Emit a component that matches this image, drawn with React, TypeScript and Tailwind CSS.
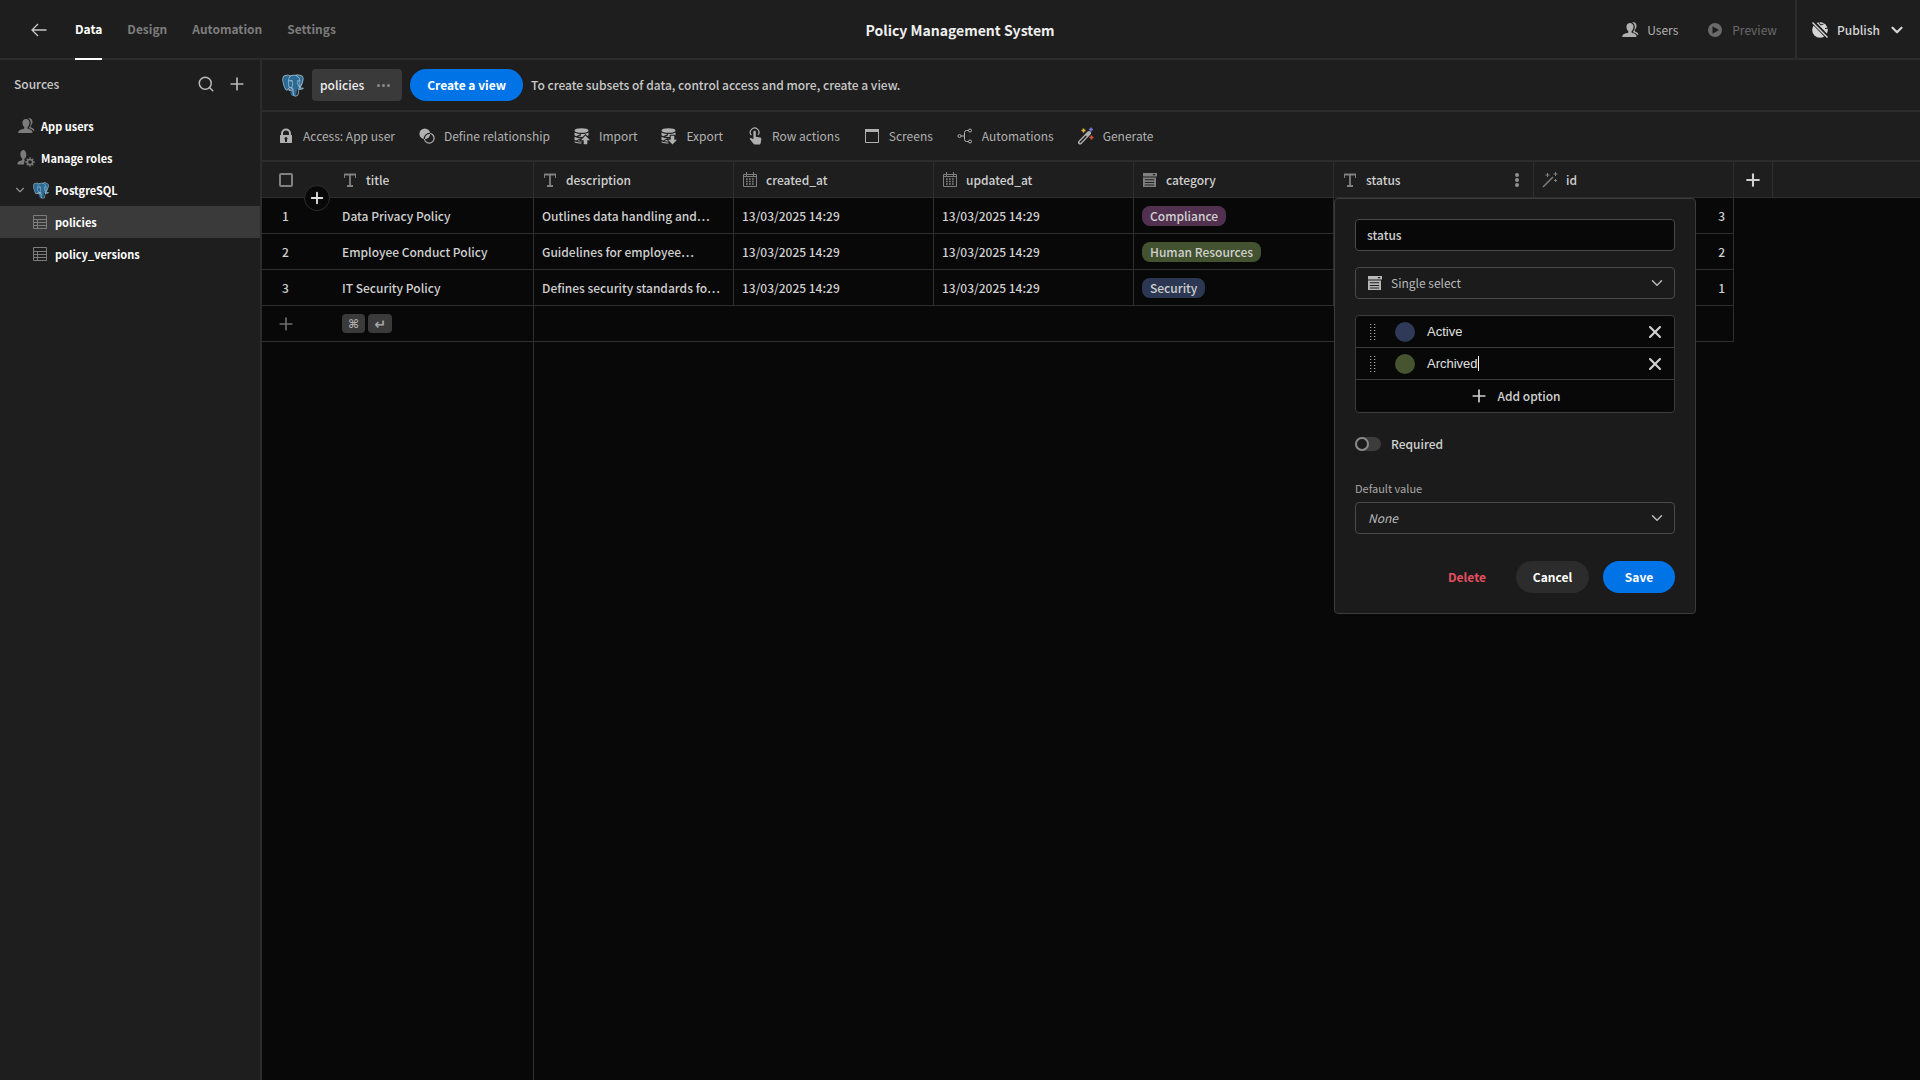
import React from 'react';
import { ChevronDown, Plus, Search, X } from 'lucide-react';
import { SiPostgresql } from 'react-icons/si';

interface IconProps {
  className?: string;
}

const PostgresIcon: React.FC<{ size: 'sm' | 'md' }> = ({ size }) => (
  <span className={`relative block shrink-0 ${size === 'md' ? 'w-[22px] h-[23px]' : 'w-4 h-[17px]'}`}>
    <svg viewBox="0 0 24 24" className="absolute inset-0 w-full h-full">
      <path
        fill="#2c6a94"
        d="M4.5.8C1.6 1.3.5 4 .9 7.500c.5 3.600 2 8.500 4 9.400 1 .3 2-.8 3-1.700l1.300.6c-.2 3 .1 6.500 1.600 7.400 1.700.9 4.400.2 5-2l.7-5c2 .5 5 .2 6.500-1.500-.8-.3-2 0-2.600-.4 2-3 3.500-8 2.800-10.500C21.500.8 18 .2 15.500.9 12.500.2 10.500.8 9.500 1.500 8 .9 6.200.6 4.500.8z"
      />
    </svg>
    <SiPostgresql className="absolute inset-0 w-full h-full text-[#a9c6d8]" />
  </span>
);

const ArrowIcon: React.FC<IconProps> = ({ className }) => (
  <svg viewBox="0 0 18 18" className={`w-[18px] h-[18px] shrink-0 ${className ?? ''}`} fill="none" stroke="currentColor" strokeWidth="1.300">
    <path d="M16.500 9H2M8 3 2 9l6 6" />
  </svg>
);

const UsersIcon: React.FC<IconProps> = ({ className }) => (
  <svg viewBox="0 0 18 18" className={`w-[18px] h-[18px] shrink-0 ${className ?? ''}`} fill="currentColor">
    <path d="M11.500 12.100c-.9-.2-1-.7-1-1.300 0-.5.300-.7.700-1.200.8-1 1.300-2.300 1.300-3.800C12.500 3.300 11 2 9 2S5.400 3.300 5.400 5.800c0 1.500.5 2.800 1.300 3.800.4.500.7.700.7 1.200 0 .6-.1 1.100-1 1.300C3 12.600 1.200 13.700 1.200 15.500c0 .3.200.5.500.5H15c.3 0 .5-.2.500-.5 0-1.800-1.300-2.900-4-3.400z" />
    <path d="M11.200 1.400c2.500-.8 4.300.8 4.300 3.400 0 1.500-.5 2.600-1.200 3.500-.4.500-.6.800-.6 1.300 0 .6.200.9.900 1.100 1.500.5 2.600 1.300 2.900 3h-1.300c-.8-1.200-2-1.900-3.900-2.300-.3-.1-.4-.4-.1-.9.900-1.200 1.600-2.700 1.600-4.700 0-2-.9-3.600-2.600-4.400z" />
  </svg>
);

const UserGearIcon: React.FC<IconProps> = ({ className }) => (
  <svg viewBox="0 0 18 18" className={`w-[18px] h-[18px] shrink-0 ${className ?? ''}`} fill="currentColor">
    <path d="M8 11.500c-.6-.3-.7-.6-.7-1.100 0-.4.300-.6.700-1.100.8-.9 1.300-2 1.300-3.600C9.300 3.200 8 1 6.800 1 4.900 1 3.400 2.500 3.400 5c0 1.600.5 3 1.300 4 .4.500.6.700.6 1.200 0 .6-.2 1-1 1.200-2.500.6-3.900 1.700-3.900 3.600 0 .3.200.5.500.5h6.300c-.2-1.600.1-3 .8-4z" />
    <circle cx="13" cy="13" r="2.600" fill="none" stroke="currentColor" strokeWidth="1.500" />
    <path d="M13 8.300v2M13 15.700v2M8.300 13h2M15.700 13h2M9.700 9.700l1.400 1.400M14.900 14.900l1.400 1.400M16.300 9.700l-1.400 1.400M11.100 14.900l-1.400 1.400" stroke="currentColor" strokeWidth="1.300" />
  </svg>
);

const TableIcon: React.FC<IconProps> = ({ className }) => (
  <svg viewBox="0 0 16 16" className={`w-4 h-4 shrink-0 ${className ?? ''}`} fill="none" stroke="currentColor">
    <path d="M1.500 1.500h13v13h-13zM1.500 5.500h13M1.500 8.500h13M1.500 11.500h13M5.500 5.500v9" />
  </svg>
);

const LockIcon = () => (
  <svg viewBox="0 0 18 18" className="w-[18px] h-[18px] shrink-0" fill="currentColor">
    <path
      fillRule="evenodd"
      d="M14.500 8H14V6.500a5 5 0 0 0-10 0V8h-.5a.5.500 0 0 0-.5.500v7c0 .3.200.5.500.5h11c.3 0 .5-.2.500-.5v-7a.5.500 0 0 0-.5-.5zM6 6.500a3 3 0 0 1 6 0V8H6zm4 6.200v1.800a.5.500 0 0 1-.5.500h-1a.5.500 0 0 1-.5-.5v-1.800a1.500 1.500 0 1 1 2 0z"
    />
  </svg>
);

const RelationshipIcon = () => (
  <svg viewBox="0 0 18 18" className="w-[18px] h-[18px] shrink-0">
    <circle cx="11.200" cy="11.200" r="4.900" fill="#1e1e1e" stroke="currentColor" strokeWidth="1.200" />
    <circle cx="6.800" cy="6.800" r="5.400" fill="currentColor" />
    <path d="M6.300 12a5.400 5.400 0 0 1 5.700-5.700" fill="none" stroke="#1e1e1e" strokeWidth="1.200" />
    <path d="M7.200 12.800a6.200 6.200 0 0 0 5.600-5.600" fill="none" stroke="#1e1e1e" strokeWidth="1" />
  </svg>
);

const DatabaseArrowIcon: React.FC<{ up?: boolean }> = ({ up }) => {
  const arrow = up ? 'M12.500 8.500l4.500 4.800h-2.700v4h-3.600v-4H8z' : 'M12.500 17.500l4.500-4.800h-2.700v-4h-3.600v4H8z';
  return (
    <svg viewBox="0 0 18 18" className="w-[18px] h-[18px] shrink-0" fill="currentColor">
      <ellipse cx="8.500" cy="3.500" rx="7" ry="2.300" />
      <path d="M1.500 5.400c2 1.200 4.500 1.500 7 1.500s5-.3 7-1.500v2.800c-1.500 1.300-4.500 1.700-7 1.700s-5.500-.4-7-1.700z" />
      <path d="M1.500 9.700c2 1.200 4.500 1.500 7 1.500v3.500c-2.500 0-5.500-.7-7-2z" />
      <path d="M1.500 14.200c2 1.200 4.500 1.300 7 1.300v1c-2.500 0-5.500-.3-7-1.300z" />
      <path d="M4 9.600l4-2M3.500 13.800l4.500-2" stroke="#1e1e1e" strokeWidth="1.200" />
      <path d={arrow} stroke="#1e1e1e" strokeWidth="2" />
      <path d={arrow} />
    </svg>
  );
};

const TouchIcon = () => (
  <svg viewBox="0 0 18 18" className="w-[18px] h-[18px] shrink-0" fill="currentColor">
    <path d="M7.400 5c0-.8.500-1.300 1.200-1.300S9.800 4.200 9.800 5v4.700l4.300.8c.9.200 1.300.8 1.200 1.700l-.6 3.800c-.1.900-.6 1.500-1.400 1.500H9c-.6 0-1.100-.3-1.500-.8L3.900 12.300c-.5-.8.3-1.700 1.200-1.300l2.300 1.200z" />
    <path d="M5.400 8.200A4.300 4.300 0 1 1 12 8" fill="none" stroke="currentColor" strokeWidth="1.200" />
  </svg>
);

const ScreenIcon = () => (
  <svg viewBox="0 0 18 18" className="w-[18px] h-[18px] shrink-0">
    <path d="M2.500 2.500h13v13h-13z" fill="none" stroke="currentColor" />
    <path d="M2 2h14v3H2z" fill="currentColor" />
  </svg>
);

const BranchIcon = () => (
  <svg viewBox="0 0 18 18" className="w-[18px] h-[18px] shrink-0" fill="none" stroke="currentColor">
    <circle cx="3.500" cy="9" r="1.500" />
    <circle cx="14" cy="3.500" r="1.500" />
    <circle cx="14" cy="14.500" r="1.500" />
    <path d="M5 9h3.500M12.500 3.500h-2a2 2 0 0 0-2 2v7a2 2 0 0 0 2 2h2" />
  </svg>
);

const GenerateIcon = () => (
  <svg viewBox="0 0 18 18" className="w-[18px] h-[18px] shrink-0" fill="none">
    <path d="M3 15.500 12 6" stroke="#b0b0b0" strokeWidth="4" strokeLinecap="round" />
    <path d="M3.200 15.300 9 9.200" stroke="#1e1e1e" strokeWidth="1.500" strokeLinecap="round" />
    <path d="M6.500 1.500v4M4.500 3.500h4" stroke="#e5b93c" strokeWidth="1.600" />
    <path d="M14 .5v4M12 2.500h4" stroke="#7373e0" strokeWidth="1.600" />
    <path d="M14.500 8.500v4M12.500 10.500h4" stroke="#e0523f" strokeWidth="1.600" />
  </svg>
);

const TextIcon = () => (
  <svg viewBox="0 0 16 16" className="w-4 h-4 shrink-0" fill="none" stroke="currentColor">
    <path d="M2 2.500h12M8 2.500V14M5 14h6" strokeWidth="1.800" />
    <path d="M2.500 2v4M13.500 2v4" />
  </svg>
);

const CalendarIcon = () => (
  <svg viewBox="0 0 16 16" className="w-4 h-4 shrink-0" fill="none" stroke="currentColor">
    <path d="M1.500 2.500h13v12h-13zM4.500 0v4M11.500 0v4M1.500 4.500h13" />
    <path d="M4 7h9M4 9.500h9M4 12h9" strokeWidth="1.500" strokeDasharray="1.700 1.300" />
  </svg>
);

const SelectIcon = () => (
  <svg viewBox="0 0 16 16" className="w-4 h-4 shrink-0" fill="currentColor">
    <path fillRule="evenodd" d="M1 1h14v3.500H1zM10.500 2l1.500 1.700L13.500 2zM1 5.500h13V15H1zM2.800 7.200v1.100h9.400V7.200zM2.800 9.900V11h9.400V9.900zM2.800 12.500v1.100h9.400v-1.100z" />
  </svg>
);

const WandIcon = () => (
  <svg viewBox="0 0 16 16" className="w-4 h-4 shrink-0" fill="none" stroke="currentColor">
    <path d="M1 15 11 5" strokeWidth="1.500" />
    <path d="M5.500 1v4M3.500 3h4M13.500 0v4M11.500 2h4M13.500 7v3M12 8.500h3" />
  </svg>
);

const PlayIcon = () => (
  <svg viewBox="0 0 18 18" className="w-[18px] h-[18px] shrink-0" fill="currentColor">
    <path fillRule="evenodd" d="M9 2a7 7 0 1 0 0 14A7 7 0 0 0 9 2zM6.500 5.200 13 9l-6.500 3.800z" />
  </svg>
);

const GlobeStrikeIcon = () => (
  <svg viewBox="0 0 18 18" className="w-[18px] h-[18px] shrink-0">
    <circle cx="9" cy="9" r="7.800" fill="currentColor" />
    <path d="M8 1.200 9.500 4l3-1M14 7.500l3-.5" stroke="#1e1e1e" fill="none" />
    <path d="M2 1l15 15.500" stroke="#1e1e1e" strokeWidth="4" />
    <path d="M1.500 1.500l15 15" stroke="currentColor" strokeWidth="1.400" />
  </svg>
);

const DragIcon = () => (
  <svg viewBox="0 0 6 16" className="w-[6px] h-4 shrink-0" fill="#a0a0a0">
    {[0, 3, 6, 9, 12, 15].map((y) => (
      <g key={y}>
        <rect x="0" y={y} width="1.300" height="1" />
        <rect x="4" y={y} width="1.300" height="1" />
      </g>
    ))}
  </svg>
);

const tabs = ['Data', 'Design', 'Automation', 'Settings'];

const tools = [
  { label: 'Access: App user', icon: <LockIcon /> },
  { label: 'Define relationship', icon: <RelationshipIcon /> },
  { label: 'Import', icon: <DatabaseArrowIcon up /> },
  { label: 'Export', icon: <DatabaseArrowIcon /> },
  { label: 'Row actions', icon: <TouchIcon /> },
  { label: 'Screens', icon: <ScreenIcon /> },
  { label: 'Automations', icon: <BranchIcon /> },
  { label: 'Generate', icon: <GenerateIcon /> },
];

const rows = [
  {
    title: 'Data Privacy Policy',
    description: 'Outlines data handling and…',
    date: '13/03/2025 14:29',
    category: 'Compliance',
    tag: 'bg-[#52304f]',
    id: 3,
  },
  {
    title: 'Employee Conduct Policy',
    description: 'Guidelines for employee…',
    date: '13/03/2025 14:29',
    category: 'Human Resources',
    tag: 'bg-[#43522f]',
    id: 2,
  },
  {
    title: 'IT Security Policy',
    description: 'Defines security standards fo…',
    date: '13/03/2025 14:29',
    category: 'Security',
    tag: 'bg-[#2b3753]',
    id: 1,
  },
];

const options = [
  { name: 'Active', color: 'bg-[#2e3a57]' },
  { name: 'Archived', color: 'bg-[#465530]', editing: true },
];

const Header = () => (
  <header className="grid grid-cols-[1fr_auto_1fr] h-[60px] border-b-2 border-[#2c2c2c] bg-[#1e1e1e]">
    <div className="flex items-center pl-[30px]">
      <button aria-label="Back" className="mr-[27px] text-[#c8c8c8]">
        <ArrowIcon />
      </button>
      <nav className="flex gap-[25px] h-[60px]">
        {tabs.map((tab, i) => (
          <a
            key={tab}
            href="#"
            className={`flex items-center border-b-2 font-bold ${
              i === 0 ? 'border-white text-white' : 'border-transparent text-[#7c7c7c]'
            }`}
          >
            {tab}
          </a>
        ))}
      </nav>
    </div>
    <h1 className="flex items-center text-sm font-bold text-[#efefef]">Policy Management System</h1>
    <div className="flex items-center justify-end">
      <button className="flex items-center gap-2 mr-7 text-[#b0b0b0]">
        <UsersIcon />
        Users
      </button>
      <button disabled className="flex items-center gap-2 mr-[18px] text-[#6a6a6a]">
        <PlayIcon />
        Preview
      </button>
      <button className="flex items-center gap-2 h-full pl-[14px] pr-[14px] border-l-2 border-[#2c2c2c] font-medium text-[#d4d4d4]">
        <GlobeStrikeIcon />
        Publish
        <ChevronDown className="w-[18px] h-[18px]" strokeWidth={3} />
      </button>
    </div>
  </header>
);

const Sidebar = () => (
  <aside className="w-[262px] shrink-0 border-r-2 border-[#2c2c2c] bg-[#1e1e1e]">
    <div className="flex items-center h-12 mb-[2px] pl-[14px] pr-[13px] text-[#b8b8b8]">
      <h2 className="flex-1 font-medium text-[#c8c8c8]">Sources</h2>
      <button aria-label="Search" className="mr-3">
        <Search className="w-[18px] h-[18px]" />
      </button>
      <button aria-label="Add source">
        <Plus className="w-5 h-5" />
      </button>
    </div>
    <nav className="text-[11px] font-bold text-white">
      <a href="#" className="flex items-center gap-[6px] h-8 pl-[17px]">
        <UsersIcon className="text-[#7c7c7c]" />
        App users
      </a>
      <a href="#" className="flex items-center gap-[6px] h-8 pl-[17px]">
        <UserGearIcon className="text-[#7c7c7c]" />
        Manage roles
      </a>
      <a href="#" className="flex items-center gap-[6px] h-8 pl-[13px]">
        <ChevronDown className="w-[14px] h-[14px] text-[#909090]" />
        <PostgresIcon size="sm" />
        PostgreSQL
      </a>
      <a href="#" className="flex items-center gap-[7px] h-8 pl-8 bg-[#3a3a3a]">
        <TableIcon className="text-[#7c7c7c]" />
        policies
      </a>
      <a href="#" className="flex items-center gap-[7px] h-8 pl-8">
        <TableIcon className="text-[#7c7c7c]" />
        policy_versions
      </a>
    </nav>
  </aside>
);

const ColumnPopover = () => (
  <div className="absolute top-full left-0 z-20 w-[362px] mt-px p-5 border border-[#3c3c3c] rounded bg-[#1b1b1b] font-normal text-[#d0d0d0]">
    <input
      aria-label="Column name"
      defaultValue="status"
      className="block w-full h-8 mb-4 px-[11px] pb-[2px] border border-[#4a4a4a] rounded bg-[#080808] font-medium"
    />
    <div className="flex items-center gap-2 h-8 mb-4 pl-[11px] pr-2 border border-[#4a4a4a] rounded text-[#b8b8b8]">
      <SelectIcon />
      <select aria-label="Column type" className="flex-1 h-full appearance-none bg-transparent">
        <option>Single select</option>
      </select>
      <ChevronDown className="w-[18px] h-[18px]" />
    </div>
    <div className="mb-4 border border-[#3c3c3c] rounded bg-[#080808]">
      {options.map((option) => (
        <div key={option.name} className="flex items-center h-8 pl-[14px] pr-[9px] border-b border-[#3c3c3c]">
          <DragIcon />
          <span className={`w-5 h-5 ml-[19px] mr-3 rounded-full ${option.color}`} />
          <input
            aria-label={`Option ${option.name}`}
            defaultValue={option.name}
            className="field-sizing-content bg-transparent font-['Liberation_Sans',sans-serif] text-[13px] text-[#e0e0e0]"
          />
          {option.editing && <span className="w-px h-[15px] bg-white" />}
          <button aria-label={`Remove ${option.name}`} className="ml-auto">
            <X className="w-5 h-5" strokeWidth={2.5} />
          </button>
        </div>
      ))}
      <button className="flex items-center justify-center gap-2 w-full h-8 font-medium">
        <Plus className="w-5 h-5" />
        Add option
      </button>
    </div>
    <label className="flex items-center gap-[10px] h-[30px] mb-4 font-medium">
      <input type="checkbox" role="switch" className="peer sr-only" />
      <span className="flex w-[26px] h-[14px] rounded-full bg-[#3c3c3c]">
        <span className="w-[14px] h-[14px] border-2 border-[#8a8a8a] rounded-full bg-[#1b1b1b]" />
      </span>
      Required
    </label>
    <label htmlFor="default-value" className="block text-[11px] leading-[27px] text-[#a8a8a8]">
      Default value
    </label>
    <div className="flex items-center h-8 mb-[27px] pl-3 pr-2 border border-[#4a4a4a] rounded text-[#b8b8b8]">
      <select id="default-value" className="flex-1 h-full appearance-none bg-transparent italic">
        <option>None</option>
      </select>
      <ChevronDown className="w-[18px] h-[18px]" />
    </div>
    <div className="flex justify-end font-bold">
      <button className="h-8 px-4 mr-[14px] text-[#e34f5f]">Delete</button>
      <button className="w-[73px] h-8 mr-[14px] rounded-full bg-[#2c2c2c] text-white">Cancel</button>
      <button className="w-[72px] h-8 rounded-full bg-[#0073e6] text-white">Save</button>
    </div>
  </div>
);

const HeadCell: React.FC<{ icon: React.ReactNode; label: string; children?: React.ReactNode }> = ({
  icon,
  label,
  children,
}) => (
  <th className="relative px-2 border-r border-b border-[#2e2e2e] text-left font-medium">
    <div className="flex items-center gap-2">
      <span className="text-[#808080]">{icon}</span>
      {label}
      {label === 'status' && (
        <button aria-label="Column menu" className="flex flex-col gap-px ml-auto mr-[6px]">
          <span className="w-1 h-1 rounded-full bg-[#909090]" />
          <span className="w-1 h-1 rounded-full bg-[#909090]" />
          <span className="w-1 h-1 rounded-full bg-[#909090]" />
        </button>
      )}
    </div>
    {children}
  </th>
);

const Grid = () => (
  <div className="flex flex-col flex-1 bg-[#080808] text-[#d0d0d0]">
    <table className="w-full table-fixed border-separate border-spacing-0">
      <colgroup>
        <col className="w-[72px]" />
        <col className="w-[200px]" />
        <col className="w-[200px]" />
        <col className="w-[200px]" />
        <col className="w-[200px]" />
        <col className="w-[200px]" />
        <col className="w-[200px]" />
        <col className="w-[200px]" />
        <col className="w-[39px]" />
        <col />
      </colgroup>
      <thead>
        <tr className="h-9 bg-[#1e1e1e]">
          <th className="relative pl-[17px] border-b border-[#2e2e2e] text-left">
            <input
              type="checkbox"
              aria-label="Select all rows"
              className="block w-[14px] h-[14px] appearance-none border-2 border-[#808080] rounded-xs"
            />
            <button
              aria-label="Insert row"
              className="absolute left-[42px] top-[23px] z-10 flex items-center justify-center w-[26px] h-[26px] border border-[#2e2e2e] rounded-full bg-[#080808] text-[#e0e0e0]"
            >
              <Plus className="w-[18px] h-[18px]" strokeWidth={2.5} />
            </button>
          </th>
          <HeadCell icon={<TextIcon />} label="title" />
          <HeadCell icon={<TextIcon />} label="description" />
          <HeadCell icon={<CalendarIcon />} label="created_at" />
          <HeadCell icon={<CalendarIcon />} label="updated_at" />
          <HeadCell icon={<SelectIcon />} label="category" />
          <HeadCell icon={<TextIcon />} label="status">
            <ColumnPopover />
          </HeadCell>
          <HeadCell icon={<WandIcon />} label="id" />
          <th className="border-r border-b border-[#2e2e2e]">
            <button aria-label="Add column" className="block mx-auto">
              <Plus className="w-5 h-5" strokeWidth={2.5} />
            </button>
          </th>
          <th className="border-b border-[#2e2e2e]" />
        </tr>
      </thead>
      <tbody className="font-medium">
        {rows.map((row, i) => (
          <tr key={row.id} className="h-9">
            <td className="pl-5 border-b border-[#2e2e2e]">{i + 1}</td>
            <td className="px-2 border-r border-b border-[#2e2e2e] truncate">{row.title}</td>
            <td className="px-2 border-r border-b border-[#2e2e2e] truncate">{row.description}</td>
            <td className="px-2 border-r border-b border-[#2e2e2e]">{row.date}</td>
            <td className="px-2 border-r border-b border-[#2e2e2e]">{row.date}</td>
            <td className="px-2 border-r border-b border-[#2e2e2e]">
              <span className={`block w-fit px-2 rounded-lg leading-5 ${row.tag}`}>{row.category}</span>
            </td>
            <td className="border-r border-b border-[#2e2e2e]" />
            <td className="px-2 border-r border-b border-[#2e2e2e] text-right">{row.id}</td>
          </tr>
        ))}
        <tr className="h-9">
          <td className="pl-[14px] border-b border-[#2e2e2e]">
            <button aria-label="New row" className="block text-[#6e6e6e]">
              <Plus className="w-5 h-5" />
            </button>
          </td>
          <td className="px-2 border-r border-b border-[#2e2e2e]">
            <div className="flex gap-[3px] text-[#a8a8a8]">
              <kbd className="flex items-center justify-center w-[23px] h-[19px] rounded bg-[#3a3a3a] font-['DejaVu_Sans',sans-serif] text-xs font-bold">
                ⌘
              </kbd>
              <kbd className="flex items-center justify-center w-6 h-[19px] rounded bg-[#3a3a3a] font-['DejaVu_Sans',sans-serif] text-sm font-bold">
                ↵
              </kbd>
            </div>
          </td>
          <td colSpan={6} className="border-r border-b border-[#2e2e2e]" />
        </tr>
      </tbody>
    </table>
    {/* pinned title column keeps its edge below the last row */}
    <div className="flex-1 w-[272px] border-r border-[#2e2e2e]" />
  </div>
);

export default function App() {
  return (
    <div className="flex flex-col min-h-screen bg-[#080808] font-['Noto_Sans_CJK_KR',sans-serif] text-xs leading-5">
      <Header />
      <div className="flex flex-1">
        <Sidebar />
        <main className="flex flex-col flex-1 min-w-0 bg-[#1e1e1e]">
          <div className="flex items-center gap-2 h-[52px] pl-5 border-b-2 border-[#2c2c2c]">
            <PostgresIcon size="md" />
            <div className="flex items-center gap-[13px] h-8 px-2 rounded bg-[#3a3a3a] font-medium text-[#efefef]">
              policies
              <button aria-label="Table options" className="flex gap-[2px] mr-1">
                <span className="w-[3px] h-[3px] rounded-full bg-[#8a8a8a]" />
                <span className="w-[3px] h-[3px] rounded-full bg-[#8a8a8a]" />
                <span className="w-[3px] h-[3px] rounded-full bg-[#8a8a8a]" />
              </button>
            </div>
            <button className="h-8 px-[17px] rounded-full bg-[#0073e6] font-bold text-white">Create a view</button>
            <p className="font-medium text-[#c8c8c8]">
              To create subsets of data, control access and more, create a view.
            </p>
          </div>
          <div className="flex items-center gap-[23px] h-[50px] pl-[15px] border-b-2 border-[#2c2c2c] text-[#b0b0b0]">
            {tools.map((tool) => (
              <button key={tool.label} className="flex items-center gap-2">
                {tool.icon}
                {tool.label}
              </button>
            ))}
          </div>
          <Grid />
        </main>
      </div>
    </div>
  );
}
